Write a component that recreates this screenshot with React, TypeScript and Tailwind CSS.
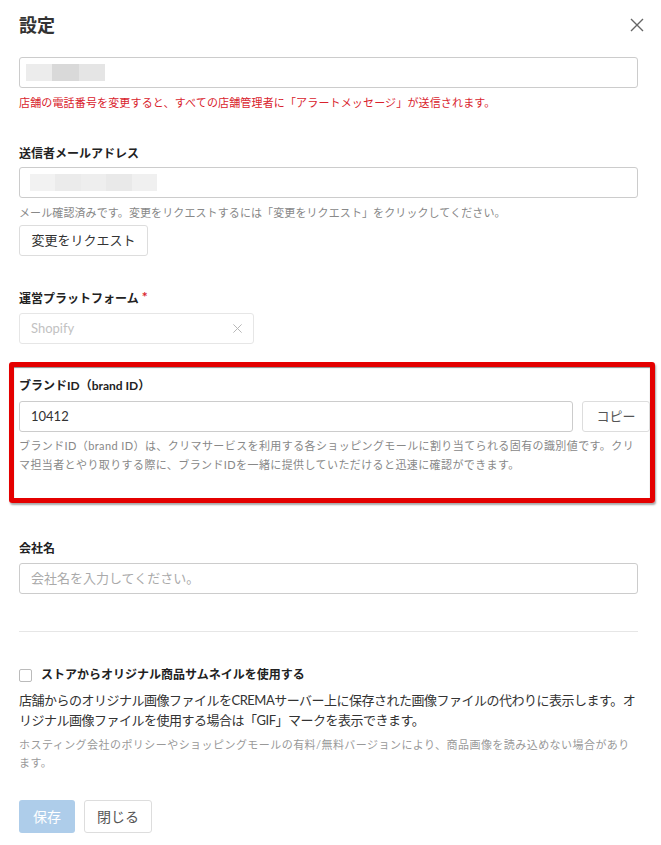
import React from "react";

const FONT = "font-['Lato','Noto_Sans_CJK_JP',sans-serif]";

function Label({ children }: { children: React.ReactNode }) {
  return <div className="text-[12px] leading-[18px] font-bold text-[#222]">{children}</div>;
}

function Blur({ shades, width }: { shades: string[]; width: number }) {
  // blurred out value in the screenshot
  return (
    <div className="flex h-[17px]">
      {shades.map((c, i) => (
        <div key={i} className="h-full" style={{ width: width / shades.length, background: c }} />
      ))}
    </div>
  );
}

function CloseIcon({ size, className }: { size: number; className?: string }) {
  return (
    <svg width={size} height={size} viewBox="0 0 16 16" className={className} fill="none" stroke="currentColor" strokeWidth="1.4">
      <path d="M2 2 L14 14 M14 2 L2 14" />
    </svg>
  );
}

export default function App() {
  return (
    <div className={`${FONT} min-h-screen bg-white text-[#333] pl-[19px] pr-[23px]`}>
      {/* header */}
      <div className="h-[50px] flex items-center justify-between">
        <h1 className="text-[18px] font-bold text-[#333]">設定</h1>
        <button className="text-[#666] -mr-[7px]">
          <CloseIcon size={16} />
        </button>
      </div>

      {/* phone */}
      <div className="mt-[7px] h-[31px] border border-[#ccc] rounded-[3px] flex items-center pl-[6px]">
        <Blur width={79} shades={["#ececec", "#d9d9d9", "#e5e5e5"]} />
      </div>
      <p className="mt-[7px] text-[11px] leading-[16px] tracking-[0.15px] text-[#d9232d]">
        店舗の電話番号を変更すると、すべての店舗管理者に「アラートメッセージ」が送信されます。
      </p>

      {/* sender email */}
      <div className="mt-[34px]">
        <Label>送信者メールアドレス</Label>
      </div>
      <div className="mt-[4px] h-[31px] border border-[#ccc] rounded-[3px] flex items-center pl-[10px]">
        <Blur width={127} shades={["#f2f2f2", "#ebebeb", "#eeeeee", "#e9e9e9", "#f0f0f0"]} />
      </div>
      <p className="mt-[7px] text-[11px] leading-[16px] tracking-[0.1px] text-[#888]">
        メール確認済みです。変更をリクエストするには「変更をリクエスト」をクリックしてください。
      </p>
      <button className="mt-[4px] h-[31px] w-[129px] border border-[#ddd] rounded-[3px] text-[13px] text-[#333] bg-white">
        変更をリクエスト
      </button>

      {/* platform */}
      <div className="mt-[34px] flex items-start">
        <Label>運営プラットフォーム</Label>
        <span className="text-[#d9232d] text-[14px] font-bold leading-[14px] ml-[3px]">*</span>
      </div>
      <div className="mt-[5px] h-[31px] w-[235px] border border-[#e6e6e6] rounded-[3px] flex items-center justify-between pl-[11px] pr-[10px]">
        <span className="text-[13px] text-[#c2c2c2]">Shopify</span>
        <CloseIcon size={11} className="text-[#b5b5b5]" />
      </div>

      {/* brand id (highlighted) */}
      <div className="mt-[18px] -ml-[10px] -mr-[17px] border-[5px] border-[#e40000] rounded-[3px] pl-[5px] pr-[12px] pt-[10px] pb-[24px] shadow-[1px_2px_2px_rgba(0,0,0,0.35),inset_0_1px_1px_rgba(0,0,0,0.45)]">
        <Label>ブランドID（brand ID）</Label>
        <div className="mt-[6px] flex gap-[9px] -mr-[12px]">
          <div className="flex-1 h-[31px] border border-[#ccc] rounded-[3px] flex items-center pl-[11px] text-[13px] text-[#333]">
            10412
          </div>
          <button className="h-[31px] w-[68px] border border-[#ddd] rounded-[3px] text-[13px] text-[#555] bg-white">
            コピー
          </button>
        </div>
        <p className="mt-[4px] text-[11px] leading-[19px] tracking-[0.4px] text-[#888]">
          ブランドID（brand ID）は、クリマサービスを利用する各ショッピングモールに割り当てられる固有の識別値です。クリマ担当者とやり取りする際に、ブランドIDを一緒に提供していただけると迅速に確認ができます。
        </p>
      </div>

      {/* company */}
      <div className="mt-[37px]">
        <Label>会社名</Label>
      </div>
      <div className="mt-[5px] h-[31px] border border-[#ccc] rounded-[3px] flex items-center pl-[11px] text-[13px] text-[#aaa]">
        会社名を入力してください。
      </div>

      <div className="mt-[37px] h-px bg-[#e6e6e6]" />

      {/* thumbnail option */}
      <label className="mt-[34px] flex items-center h-[18px]">
        <span className="w-[13px] h-[13px] border border-[#bbb] rounded-[2px] bg-white" />
        <span className="ml-[9px] text-[12px] font-bold text-[#222]">ストアからオリジナル商品サムネイルを使用する</span>
      </label>
      <p className="mt-[6px] text-[13px] leading-[20px] tracking-[-0.5px] text-[#333]">
        店舗からのオリジナル画像ファイルをCREMAサーバー上に保存された画像ファイルの代わりに表示します。オリジナル画像ファイルを使用する場合は「GIF」マークを表示できます。
      </p>
      <p className="mt-[6px] text-[11px] leading-[18px] tracking-[0.45px] text-[#999]">
        ホスティング会社のポリシーやショッピングモールの有料/無料バージョンにより、商品画像を読み込めない場合があります。
      </p>

      {/* footer buttons */}
      <div className="mt-[28px] flex gap-[9px] pb-[12px]">
        <button className="h-[33px] w-[56px] rounded-[3px] bg-[#aecdea] text-white text-[14px]">保存</button>
        <button className="h-[33px] w-[68px] rounded-[3px] border border-[#ddd] bg-white text-[#555] text-[14px]">閉じる</button>
      </div>
    </div>
  );
}
